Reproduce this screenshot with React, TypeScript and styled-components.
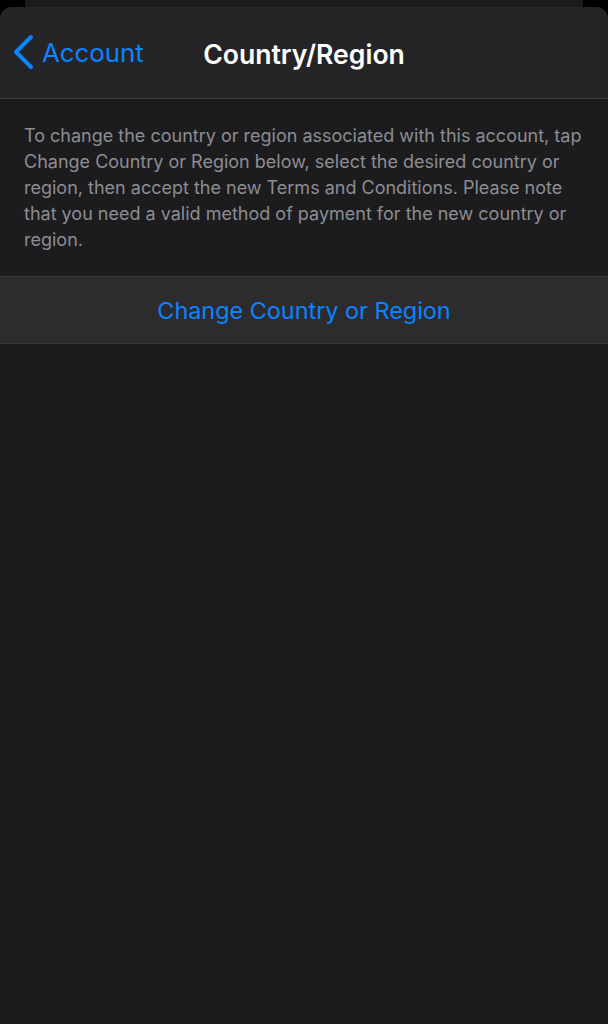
import styled, { createGlobalStyle } from "styled-components";

const GlobalStyle = createGlobalStyle`
  html, body {
    margin: 0;
    padding: 0;
    background: #000;
  }
  body {
    font-family: Inter, "Liberation Sans", sans-serif;
    -webkit-font-smoothing: antialiased;
  }
`;

const Screen = styled.div`
  display: flex;
  flex-direction: column;
  min-height: 1024px;
  background: #000;
`;

const BackSheet = styled.div`
  height: 7px;
  margin: 0 25px;
  background: #1b1b1d;
`;

const Sheet = styled.div`
  flex: 1;
  display: flex;
  flex-direction: column;
  background: #1c1c1e;
  border-radius: 12px 12px 0 0;
  overflow: hidden;
`;

const NavBar = styled.div`
  position: relative;
  height: 91px;
  display: flex;
  align-items: center;
  justify-content: center;
  background: #252527;
  border-bottom: 1px solid #3d3d3f;
`;

const BackButton = styled.button`
  position: absolute;
  left: 12px;
  top: 27px;
  display: flex;
  align-items: center;
  gap: 6px;
  padding: 0;
  border: none;
  background: transparent;
  color: #0a84ff;
  font-family: Inter, "Liberation Sans", sans-serif;
  font-size: 25.8px;
  cursor: pointer;
`;

const Title = styled.h1`
  margin: 0;
  padding-top: 2px;
  color: #fff;
  font-size: 26.6px;
  font-weight: 600;
`;

const Description = styled.p`
  margin: 0;
  padding: 24px 24px 23px;
  color: #8d8d93;
  font-size: 18px;
  line-height: 26px;
`;

const ActionRow = styled.button`
  height: 68px;
  width: 100%;
  display: flex;
  align-items: center;
  justify-content: center;
  border: none;
  border-top: 1px solid #3a3a3c;
  border-bottom: 1px solid #3a3a3c;
  background: #2c2c2e;
  color: #0a84ff;
  font-family: Inter, "Liberation Sans", sans-serif;
  font-size: 23.4px;
  cursor: pointer;
`;

const Chevron = () => (
  <svg width="24" height="36" viewBox="0 0 24 36" fill="none">
    <path
      d="M19 3 L4 18 L19 33"
      stroke="#0a84ff"
      strokeWidth="4"
      strokeLinecap="round"
      strokeLinejoin="round"
    />
  </svg>
);

const App = () => {
  return (
    <>
      <GlobalStyle />
      <Screen>
        <BackSheet />
        <Sheet>
          <NavBar>
            <BackButton>
              <Chevron />
              Account
            </BackButton>
            <Title>Country/Region</Title>
          </NavBar>
          <Description>
            To change the country or region associated with this account, tap
            Change Country or Region below, select the desired country or
            region, then accept the new Terms and Conditions. Please note that
            you need a valid method of payment for the new country or region.
          </Description>
          <ActionRow>Change Country or Region</ActionRow>
        </Sheet>
      </Screen>
    </>
  );
};

export default App;
